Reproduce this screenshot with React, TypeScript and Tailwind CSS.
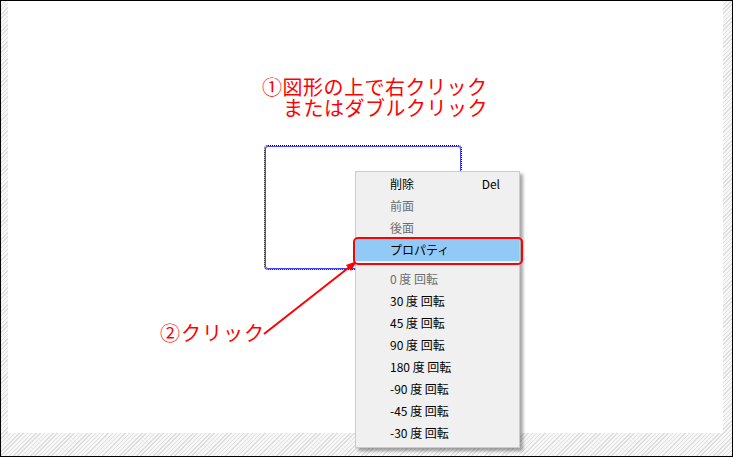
type Item = { label: string; shortcut?: string; disabled?: boolean; active?: boolean };

const topItems: Item[] = [
  { label: "削除", shortcut: "Del" },
  { label: "前面", disabled: true },
  { label: "後面", disabled: true },
  { label: "プロパティ", active: true },
];

const rotateItems: Item[] = [
  { label: "0 度 回転", disabled: true },
  { label: "30 度 回転" },
  { label: "45 度 回転" },
  { label: "90 度 回転" },
  { label: "180 度 回転" },
  { label: "-90 度 回転" },
  { label: "-45 度 回転" },
  { label: "-30 度 回転" },
];

function MenuRow({ item }: { item: Item }) {
  return (
    <div
      className={[
        "flex h-[22px] items-center justify-between pl-[34px] pr-[19px] text-[12px]",
        item.active ? "bg-[#91c9f7]" : "",
        item.disabled ? "text-[#6d6d6d]" : "text-black",
      ].join(" ")}
    >
      <span>{item.label}</span>
      {item.shortcut ? <span>{item.shortcut}</span> : null}
    </div>
  );
}

export default function App() {
  return (
    <div
      className="relative h-[457px] w-[733px] border border-black bg-[repeating-linear-gradient(135deg,#dedede_0px,#dedede_1px,#f7f7f7_1px,#f7f7f7_3px)] pl-[7px] pr-[9px] pb-[23px]"
      style={{ fontFamily: '"Noto Sans CJK JP", "Noto Sans", sans-serif' }}
    >
      <div className="h-full w-full bg-white" />

      {/* step 1 caption */}
      <div className="absolute left-[261px] top-[75px] text-[20px] leading-[21px] tracking-[0.5px] text-[#ff0000]">
        <p>①図形の上で右クリック</p>
        <p className="pl-[21px]">またはダブルクリック</p>
      </div>

      {/* selected shape */}
      <div className="absolute left-[263px] top-[144px] h-[125px] w-[198px] rounded-[4px] border border-dotted border-black shadow-[inset_0_0_0_1px_#4646ff]" />

      {/* step 2 caption */}
      <p className="absolute left-[159px] top-[322px] text-[20px] leading-[20px] tracking-[1px] text-[#ff0000]">
        ②クリック
      </p>

      <svg className="absolute left-0 top-0" width="733" height="457">
        <line x1="263" y1="333" x2="351" y2="264" stroke="#ff0000" strokeWidth="2" />
        <polygon points="356,260 345,264 350,270" fill="#ff0000" />
      </svg>

      {/* context menu */}
      <div className="absolute left-[354px] top-[170px] w-[165px] border border-[#cccccc] bg-[#f0f0f0] pt-[1px] pb-[3px] shadow-[3px_3px_3px_rgba(0,0,0,0.35)]">
        {topItems.map((it) => (
          <MenuRow key={it.label} item={it} />
        ))}
        <div className="h-[7px]" />
        {rotateItems.map((it) => (
          <MenuRow key={it.label} item={it} />
        ))}
      </div>

      {/* highlight marker */}
      <div className="absolute left-[352px] top-[236px] h-[28px] w-[170px] rounded-[5px] border-2 border-[#ff0000]" />
    </div>
  );
}
